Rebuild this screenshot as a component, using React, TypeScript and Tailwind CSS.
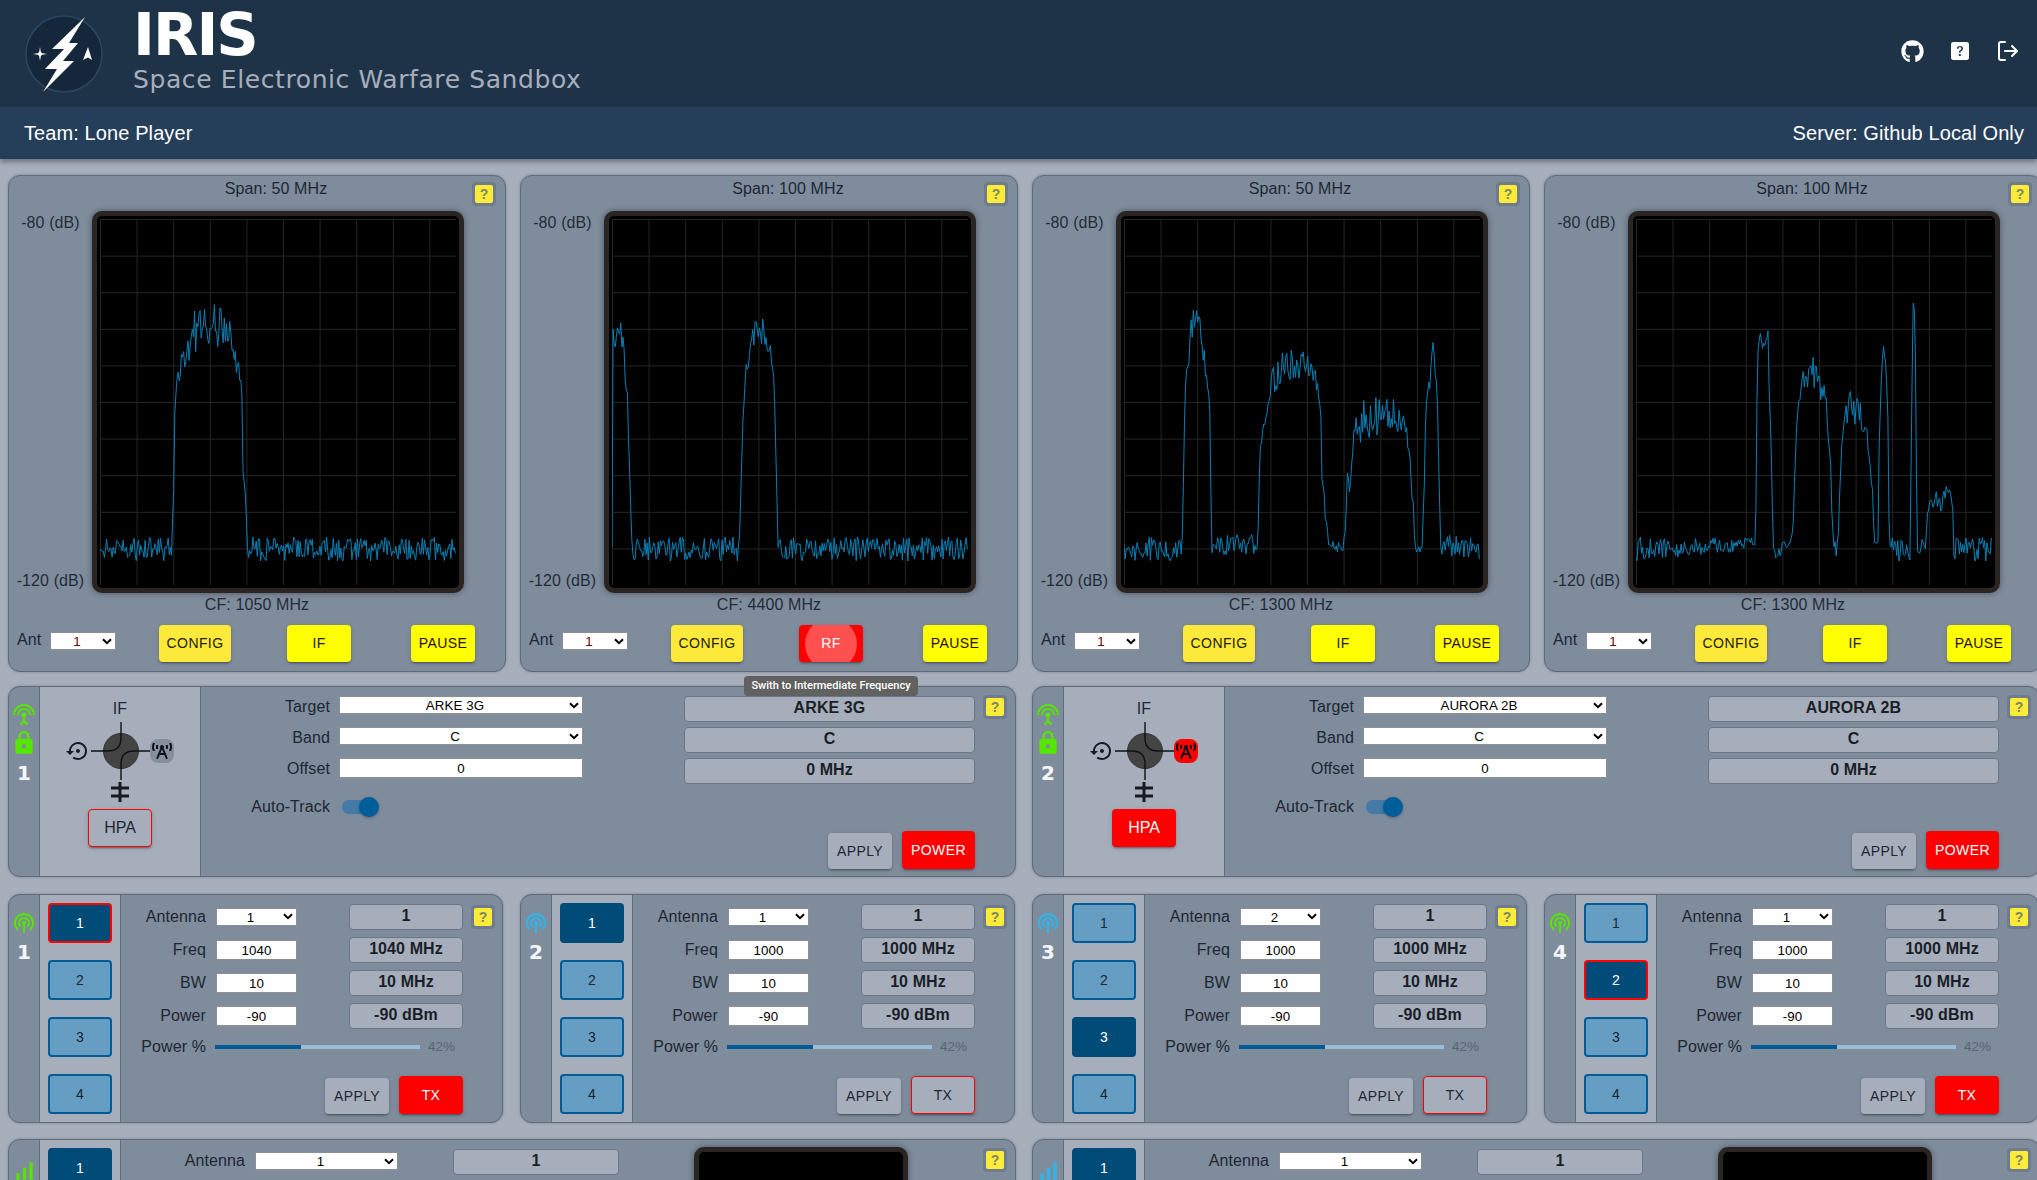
import React from "react";
import { FaGithub, FaBroadcastTower } from "react-icons/fa";
import { BsQuestionSquareFill } from "react-icons/bs";
import { FiLogOut } from "react-icons/fi";
import { MdLock, MdPodcasts, MdSettingsInputAntenna, MdSettingsBackupRestore, MdSignalCellularAlt } from "react-icons/md";

type P = [number, number, number];

function rng(seed: number) {
  let a = seed;
  return () => {
    a |= 0;
    a = (a + 0x6d2b79f5) | 0;
    let t = Math.imul(a ^ (a >>> 15), 1 | a);
    t = (t + Math.imul(t ^ (t >>> 7), 61 | t)) ^ t;
    return ((t ^ (t >>> 14)) >>> 0) / 4294967296;
  };
}

function trace(seed: number, env: P[]) {
  const r = rng(seed);
  const pts: string[] = [];
  const full: P[] = [...env, [356, 330, 12]];
  let k = 0;
  let last: P = [0, 330, 12];
  const step = 1.1;
  for (let x = 0; x <= 356; x += step) {
    while (k < full.length && full[k][0] < x) {
      last = full[k];
      k++;
    }
    const next = full[Math.min(k, full.length - 1)];
    const span = next[0] - last[0];
    const u = span > 0 ? Math.min(1, (x - last[0]) / span) : 0;
    const y0 = last[1] + (next[1] - last[1]) * u;
    const amp = (last[2] + (next[2] - last[2]) * u) * (y0 < 300 ? 1.35 : 1);
    const y = y0 + (r() - 0.5) * 2 * amp;
    pts.push(`${x.toFixed(2)},${y.toFixed(1)}`);
  }
  return pts.join(" ");
}

const traces: P[][] = [
  [
    [0, 330, 12], [72, 330, 12], [73, 290, 20], [74, 260, 5], [75, 180, 2], [76, 170, 5], [80, 155, 12], [85, 130, 14],
    [95, 115, 18], [105, 105, 14], [115, 105, 18], [125, 105, 14], [132, 125, 14], [136, 145, 12], [141, 165, 10],
    [142, 180, 2], [143, 250, 2], [145, 265, 5], [146, 290, 2], [147, 330, 12],
  ],
  [
    [0, 115, 14], [10, 118, 12], [12, 115, 10], [13, 165, 10], [16, 195, 15], [17, 230, 4], [19, 300, 2], [20, 330, 12],
    [127, 330, 12], [128, 300, 2], [131, 200, 2], [134, 150, 6], [137, 135, 8], [142, 115, 10], [150, 112, 12],
    [157, 125, 8], [160, 140, 8], [162, 160, 4], [163, 200, 2], [165, 280, 2], [166, 330, 12],
  ],
  [
    [0, 330, 12], [58, 330, 12], [59, 290, 2], [60, 240, 8], [61, 170, 3], [64, 140, 6], [68, 112, 18], [75, 112, 16],
    [80, 140, 8], [84, 165, 8], [85, 175, 6], [86, 200, 2], [87, 280, 1], [88, 326, 10], [134, 325, 10], [135, 270, 2],
    [136, 230, 8], [140, 205, 6], [143, 195, 3], [146, 175, 3], [148, 165, 12], [155, 150, 12], [165, 145, 12],
    [180, 150, 14], [190, 150, 10], [195, 170, 10], [197, 190, 12], [198, 250, 8], [200, 270, 6], [201, 300, 2],
    [203, 305, 5], [204, 325, 4], [219, 330, 6], [222, 305, 8], [223, 260, 1], [224, 250, 10], [226, 265, 10],
    [228, 235, 5], [231, 215, 12], [240, 200, 15], [260, 195, 15], [270, 190, 14], [280, 205, 10], [285, 230, 6],
    [287, 260, 10], [289, 275, 10], [291, 330, 3], [292, 328, 6], [298, 328, 6], [300, 280, 1], [302, 180, 4],
    [306, 165, 6], [309, 125, 6], [313, 170, 4], [314, 210, 2], [316, 300, 1], [317, 325, 12],
  ],
  [
    [0, 330, 12], [119, 325, 6], [120, 290, 1], [121, 180, 1], [122, 130, 2], [123, 118, 3], [127, 125, 10], [132, 118, 6],
    [133, 165, 3], [135, 220, 1], [137, 320, 1], [138, 335, 8], [157, 320, 8], [158, 280, 2], [160, 220, 2], [161, 190, 6],
    [165, 165, 10], [170, 155, 16], [178, 150, 16], [185, 170, 10], [190, 180, 8], [191, 200, 3], [193, 230, 4],
    [195, 245, 6], [196, 300, 2], [198, 325, 3], [200, 330, 8], [202, 330, 8], [203, 290, 1], [206, 220, 1], [208, 205, 6],
    [212, 190, 14], [220, 190, 14], [228, 205, 10], [231, 215, 6], [233, 230, 10], [235, 260, 2], [237, 275, 1],
    [238, 325, 2], [242, 325, 2], [243, 230, 1], [245, 170, 2], [247, 125, 2], [250, 150, 4], [252, 200, 1], [253, 300, 1],
    [254, 330, 12], [274, 330, 12], [275, 250, 1], [277, 85, 2], [279, 90, 2], [280, 200, 1], [281, 320, 1], [282, 330, 10],
    [290, 325, 8], [291, 300, 2], [294, 280, 8], [300, 280, 6], [305, 290, 6], [310, 270, 4], [315, 272, 4], [317, 295, 3],
    [318, 340, 1], [319, 330, 12],
  ],
];

const shadow = "shadow-[0_3px_1px_-2px_rgba(0,0,0,0.2),0_2px_2px_0_rgba(0,0,0,0.14),0_1px_5px_0_rgba(0,0,0,0.12)]";

function Select({ value, options, className = "", color = "text-black" }: { value: string; options: string[]; className?: string; color?: string }) {
  return (
    <div className={`relative h-[18px] shrink-0 ${className}`}>
      <select defaultValue={value} className={`block w-full h-full bg-white text-[13.33px] text-center border border-[#8a8f96] ${color}`}>
        {options.map((o) => (
          <option key={o}>{o}</option>
        ))}
      </select>
      <div className="absolute right-[1px] top-[1px] w-[17px] h-4 bg-white flex items-center justify-center pointer-events-none">
        <svg width="10" height="7" viewBox="0 0 10 7" className="block">
          <path d="M1 1.2L5 5.2L9 1.2" fill="none" stroke="#000" strokeWidth="2" />
        </svg>
      </div>
    </div>
  );
}

function Help({ className = "" }: { className?: string }) {
  return (
    <div className={`w-6 h-6 shrink-0 rounded bg-[#6f7c8d] flex items-center justify-center ${className}`}>
      <div className="w-[18px] h-[18px] rounded-[2px] bg-[#fdeb3a] flex items-center justify-center text-[14px] font-bold leading-none text-[#7d8468]">?</div>
    </div>
  );
}

function Btn({ children, className = "" }: { children: React.ReactNode; className?: string }) {
  return (
    <div className={`rounded flex items-center justify-center text-[14px] tracking-[0.4px] shrink-0 ${shadow} ${className}`}>{children}</div>
  );
}

function Grid() {
  const lines = [0, 1, 2, 3, 4, 5, 6, 7, 8, 9];
  return (
    <>
      {lines.map((i) => (
        <line key={"v" + i} x1={i * 36.6 + 0.5} x2={i * 36.6 + 0.5} y1={0} y2={366} stroke="#262626" />
      ))}
      {lines.map((i) => (
        <line key={"h" + i} y1={i * 36.6 + 0.5} y2={i * 36.6 + 0.5} x1={0} x2={356} stroke="#262626" />
      ))}
    </>
  );
}

function Spectrum({ span, cf, mode, idx }: { span: string; cf: string; mode: string; idx: number }) {
  return (
    <div className="w-[498px] h-[497px] shrink-0 rounded-xl border border-[#5b6c7e] bg-[#7f8c9c] text-[#1d2733] shadow-[0_0_3px_rgba(0,0,0,0.25)]">
      <div className="grid grid-cols-[83px_372px_1fr] grid-rows-[35px_382px]">
        <div />
        <div className="text-center text-[16px] leading-6 pr-[4px] mt-px">Span: {span}</div>
        <Help className="ml-2 mt-[6px]" />
        <div className="flex flex-col justify-between items-center text-[16px] leading-6 text-[#222c38]">
          <div>-80 (dB)</div>
          <div>-120 (dB)</div>
        </div>
        <div className="rounded-[10px] border-[5px] border-[#2a2522] p-[3px] bg-black overflow-hidden shadow-[0_0_6px_rgba(0,0,0,0.4)]">
          <svg width="356" height="366" viewBox="0 0 356 366" className="block">
            <Grid />
            <polyline points={trace(idx * 97 + 11, traces[idx])} fill="none" stroke="#0a80b5" strokeWidth="1" />
          </svg>
        </div>
      </div>
      <div className="ml-[83px] w-[372px] pr-[42px] text-center text-[16px] leading-[22px] mt-px text-[#222c38]">CF: {cf}</div>
      <div className="flex items-start mt-[9px] pl-2">
        <div className="w-[33px] mt-[3px] text-[16px] leading-6">Ant</div>
        <Select value="1" options={["1"]} className="w-[66px] mt-[7px]" color="text-[#5a0808]" />
        <Btn className="w-[72px] h-[37px] ml-[43px] bg-[#fde93a] text-[#1d1d00]">CONFIG</Btn>
        {mode === "RF" ? (
          <div className="relative ml-[56px]">
            <Btn className="relative w-16 h-[37px] bg-[#ff0000] text-white overflow-hidden">
              <span className="absolute left-[6px] -top-[7px] w-[52px] h-[52px] rounded-full bg-[#ff5050]" />
              <span className="relative">RF</span>
            </Btn>
            <div className="absolute z-10 left-1/2 -translate-x-1/2 top-[51px] w-[174px] h-5 rounded bg-[#616161] text-white text-center text-[11px] leading-5 font-medium tracking-normal" style={{ fontFamily: "Roboto, sans-serif" }}>
              Swith to Intermediate Frequency
            </div>
          </div>
        ) : (
          <Btn className="w-16 h-[37px] ml-[56px] bg-[#ffff00] text-[#1d1d00]">{mode}</Btn>
        )}
        <Btn className="w-16 h-[37px] ml-[60px] bg-[#ffff00] text-[#2a0c00]">PAUSE</Btn>
      </div>
    </div>
  );
}

function Strip({ children, n }: { children: React.ReactNode; n: string }) {
  return (
    <div className="w-[30px] shrink-0 flex flex-col items-center pt-4">
      {children}
      <div className="mt-[5px] text-[20px] font-bold leading-6 text-[#f4f6fa]" style={{ fontFamily: "'DejaVu Sans', sans-serif" }}>{n}</div>
    </div>
  );
}

function Coupler({ flip }: { flip: boolean }) {
  return (
    <svg width="60" height="58" viewBox="0 0 60 58" className="block -mx-px">
      <circle cx="30" cy="29" r="17.5" fill="#444444" stroke="#333" />
      <g fill="none" stroke="#111" strokeWidth="1.4">
        {flip ? (
          <>
            <path d="M30 0V16Q30 29 43 29H60" />
            <path d="M0 29H17Q30 29 30 42V58" />
          </>
        ) : (
          <>
            <path d="M30 0V16Q30 29 17 29H0" />
            <path d="M60 29H43Q30 29 30 42V58" />
          </>
        )}
      </g>
    </svg>
  );
}

function Readout({ children, className = "" }: { children?: React.ReactNode; className?: string }) {
  return (
    <div className={`h-[26px] shrink-0 rounded border border-[#6a7788] bg-[#a7aebb] flex items-center justify-center pb-[2px] font-bold text-[16px] text-[#1a1f27] ${className}`}>
      {children}
    </div>
  );
}

function Upconverter({ n, target, hpa, flip, txOn }: { n: string; target: string; hpa: boolean; flip: boolean; txOn: boolean }) {
  return (
    <div className="w-[1008px] h-[191px] shrink-0 rounded-xl border border-[#5b6c7e] bg-[#7f8c9c] text-[#1d2733] flex overflow-hidden shadow-[0_0_3px_rgba(0,0,0,0.25)]">
      <Strip n={n}>
        <MdSettingsInputAntenna size={24} color="#55e600" />
        <MdLock size={26} color="#55e600" className="mt-[3px]" />
      </Strip>
      <div className="w-[162px] shrink-0 border-x border-[#5b6c7e] bg-[#a7aebb] flex flex-col items-center pt-[10px]">
        <div className="text-[16px] leading-6">IF</div>
        <div className="flex items-center mt-px">
          <MdSettingsBackupRestore size={24} color="#16191f" />
          <div className="w-[2px]" />
          <Coupler flip={flip} />
          <div className={`w-6 h-6 rounded-lg flex items-center justify-center ${txOn ? "bg-[#ff0000]" : "bg-[#8490a0]"}`}>
            <FaBroadcastTower size={20} color="#0e1218" />
          </div>
        </div>
        <svg width="20" height="20" viewBox="0 0 20 20" className="mt-[2px] block">
          <path d="M10 0V20M1 6H19M1 14H19" stroke="#16191f" strokeWidth="3" fill="none" />
        </svg>
        <Btn className={`w-16 h-[38px] mt-[7px] !text-[16px] !tracking-normal ${hpa ? "bg-[#ff0000] text-white" : "border border-[#ff0000] bg-[#a7aebb] text-[#1d2733]"}`}>HPA</Btn>
      </div>
      <div className="flex-1 flex flex-col pt-[9px]">
        <div className="flex items-start">
          <div className="w-[129px] mr-[9px] text-right text-[16px] leading-6 flex flex-col">
            <div className="h-[31px] -mt-[1px]">Target</div>
            <div className="h-[31px]">Band</div>
            <div className="h-[31px]">Offset</div>
            <div className="h-[31px] mt-[7px]">Auto-Track</div>
          </div>
          <div className="w-[244px] flex flex-col">
            <Select value={target} options={[target]} className="w-full mb-[13px]" />
            <Select value="C" options={["C"]} className="w-full mb-[13px]" />
            <input readOnly value="0" className="w-full h-5 bg-white text-[13.33px] text-center border border-[#8a8f96] text-black" />
            <div className="relative w-8 h-[14px] mt-[22px] ml-[3px] rounded-full bg-[#437ba6]">
              <div className="absolute -right-[5px] -top-[3px] w-5 h-5 rounded-full bg-[#005d9c] shadow-[0_1px_3px_rgba(0,0,0,0.3)]" />
            </div>
          </div>
          <div className="ml-[101px] w-[291px] flex flex-col gap-[5px]">
            <Readout>{target}</Readout>
            <Readout>C</Readout>
            <Readout>0 MHz</Readout>
          </div>
          <Help className="ml-2 -mt-px" />
        </div>
        <div className="flex-1 flex items-end justify-end gap-[10px] pr-[40px] pb-[7px]">
          <Btn className="w-16 h-9 bg-[#a7aebb] text-[#1d2733]">APPLY</Btn>
          <Btn className="w-[73px] h-[38px] bg-[#ff0000] text-white">POWER</Btn>
        </div>
      </div>
    </div>
  );
}

function ChanBtn({ n, active, red }: { n: number; active: boolean; red: boolean }) {
  const cls = active
    ? `bg-[#004b78] text-white border-2 ${red ? "border-[#ff0000]" : "border-[#004b78]"}`
    : "bg-[#659dc3] text-[#1d2733] border-2 border-[#005b96]";
  return <div className={`w-16 h-10 rounded flex items-center justify-center text-[14px] ${cls}`}>{n}</div>;
}

function FormRow({ label, control, value, help }: { label: string; control: React.ReactNode; value: string; help?: boolean }) {
  return (
    <div className="h-[33px] flex items-center">
      <div className="w-[85px] mr-[10px] text-right text-[16px] leading-6">{label}</div>
      <div className="w-[81px] mr-[52px] flex">{control}</div>
      <Readout className="w-[114px]">{value}</Readout>
      {help && <Help className="ml-2" />}
    </div>
  );
}

function Field({ value }: { value: string }) {
  return <input readOnly value={value} className="w-full h-5 mt-px bg-white text-[13.33px] text-center border border-[#8a8f96] text-black" />;
}

function Transmitter({ n, green, sel, red, ant, freq, tx }: { n: string; green: boolean; sel: number; red: boolean; ant: string; freq: string; tx: boolean }) {
  return (
    <div className="w-[495px] h-[229px] shrink-0 rounded-xl border border-[#5b6c7e] bg-[#7f8c9c] text-[#1d2733] flex overflow-hidden shadow-[0_0_3px_rgba(0,0,0,0.25)]">
      <Strip n={n}>
        <MdPodcasts size={24} color={green ? "#55e600" : "#2bb8f0"} />
      </Strip>
      <div className="w-[82px] shrink-0 border-x border-[#5b6c7e] bg-[#a7aebb] flex flex-col items-center justify-between py-2">
        {[1, 2, 3, 4].map((i) => (
          <ChanBtn key={i} n={i} active={sel === i} red={red} />
        ))}
      </div>
      <div className="flex-1 flex flex-col pt-[5px]">
        <FormRow label="Antenna" help value="1" control={<Select value={ant} options={["1", "2"]} className="w-full" />} />
        <FormRow label="Freq" control={<Field value={freq} />} value={`${freq} MHz`} />
        <FormRow label="BW" control={<Field value="10" />} value="10 MHz" />
        <FormRow label="Power" control={<Field value="-90" />} value="-90 dBm" />
        <div className="h-[30px] flex items-center">
          <div className="w-[85px] mr-[9px] text-right text-[16px] leading-6">Power %</div>
          <div className="w-[205px] h-1 bg-[#9cbcd5] flex">
            <div className="w-[86px] h-1 bg-[#005b96]" />
          </div>
          <div className="ml-2 text-[13.33px] text-[#566373]">42%</div>
        </div>
        <div className="flex-1 flex items-end justify-end gap-[10px] pr-[39px] pb-2">
          <Btn className="w-16 h-9 bg-[#a7aebb] text-[#1d2733]">APPLY</Btn>
          <Btn className={`w-16 h-[38px] ${tx ? "bg-[#ff0000] text-white" : "border border-[#ff0000] bg-[#a7aebb] text-[#1d2733]"}`}>TX</Btn>
        </div>
      </div>
    </div>
  );
}

function Receiver({ color }: { color: string }) {
  return (
    <div className="w-[1008px] h-[300px] shrink-0 rounded-xl border border-[#5b6c7e] bg-[#7f8c9c] text-[#1d2733] flex overflow-hidden shadow-[0_0_3px_rgba(0,0,0,0.25)]">
      <Strip n="">
        <MdSignalCellularAlt size={26} color={color} className="mt-[2px]" />
      </Strip>
      <div className="w-[82px] shrink-0 border-x border-[#5b6c7e] bg-[#a7aebb] flex flex-col items-center pt-2">
        <ChanBtn n={1} active red={false} />
      </div>
      <div className="flex-1 flex items-start pt-[7px]">
        <div className="w-[124px] mr-[10px] mt-[2px] text-right text-[16px] leading-6">Antenna</div>
        <Select value="1" options={["1"]} className="w-[143px] mt-[5px]" />
        <div className="ml-[55px] w-[166px] mt-[2px] flex flex-col gap-[5px]">
          <Readout className="w-full">1</Readout>
          <Readout className="w-full" />
        </div>
        <div className="ml-[75px] w-[214px] h-[200px] rounded-[10px] border-[5px] border-[#2a2522] bg-black shadow-[0_0_6px_rgba(0,0,0,0.4)]" />
        <Help className="ml-[75px] mt-px" />
      </div>
    </div>
  );
}

function Logo() {
  return (
    <svg width="80" height="82" viewBox="24 10 80 82" className="block shrink-0">
      <circle cx="64" cy="51" r="38" fill="#15283b" stroke="#2b4661" strokeWidth="1.5" />
      <path d="M85 14L52 46H64L45 66H57L43 89L74 58H63L78 40H69Z" fill="#fff" />
      <path d="M40 44L41 50L47 51L41 52L40 58L39 52L33 51L39 50Z" fill="#fff" />
      <circle cx="40" cy="51" r="2" fill="#fff" />
      <path d="M88 44L92 57L88 54.5L83 57Z" fill="#fff" />
    </svg>
  );
}

export default function App() {
  return (
    <div className="w-full h-[1180px] overflow-hidden bg-[#a8afbc] tracking-[0.1px]" style={{ fontFamily: "'Liberation Sans', Arial, sans-serif" }}>
      <div className="h-[107px] bg-[#1f3348] flex items-center pl-6 pr-[17px]">
        <Logo />
        <div className="ml-[29px] flex flex-col self-start" style={{ fontFamily: "'DejaVu Sans', sans-serif" }}>
          <div className="text-[59px] leading-[43px] mt-[13px] font-bold text-white tracking-[-2px]">IRIS</div>
          <div className="text-[25px] leading-[26px] mt-[11px] text-[#a7aebb] whitespace-nowrap tracking-[0.6px]">Space Electronic Warfare Sandbox</div>
        </div>
        <div className="ml-auto flex items-center gap-[27px] -mt-[5px] text-white">
          <FaGithub size={23} />
          <BsQuestionSquareFill size={18} />
          <FiLogOut size={24} />
        </div>
      </div>
      <div className="h-[52px] bg-[#253e59] flex items-center justify-between pl-6 pr-[13px] text-white text-[20px] shadow-[0_3px_5px_rgba(0,0,0,0.35)]">
        <div>Team: Lone Player</div>
        <div>Server: Github Local Only</div>
      </div>
      <div className="pl-2 pt-4 flex flex-col">
        <div className="flex gap-[14px]">
          <Spectrum idx={0} span="50 MHz" cf="1050 MHz" mode="IF" />
          <Spectrum idx={1} span="100 MHz" cf="4400 MHz" mode="RF" />
          <Spectrum idx={2} span="50 MHz" cf="1300 MHz" mode="IF" />
          <Spectrum idx={3} span="100 MHz" cf="1300 MHz" mode="IF" />
        </div>
        <div className="flex gap-4 mt-[14px]">
          <Upconverter n="1" target="ARKE 3G" hpa={false} flip={false} txOn={false} />
          <Upconverter n="2" target="AURORA 2B" hpa flip txOn />
        </div>
        <div className="flex gap-[17px] mt-[17px]">
          <Transmitter n="1" green sel={1} red ant="1" freq="1040" tx />
          <Transmitter n="2" green={false} sel={1} red={false} ant="1" freq="1000" tx={false} />
          <Transmitter n="3" green={false} sel={3} red={false} ant="2" freq="1000" tx={false} />
          <Transmitter n="4" green sel={2} red ant="1" freq="1000" tx />
        </div>
        <div className="flex gap-4 mt-4">
          <Receiver color="#55e600" />
          <Receiver color="#2bb8f0" />
        </div>
      </div>
    </div>
  );
}
